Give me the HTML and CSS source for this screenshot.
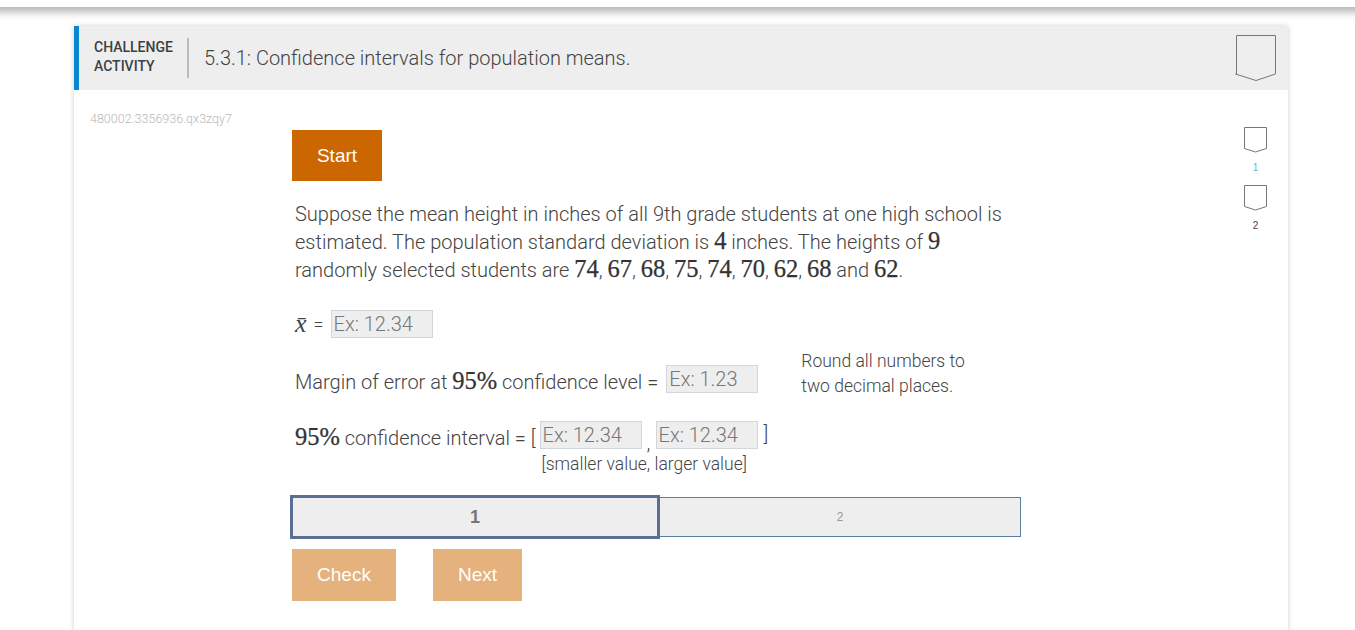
FILE: index.html
```html
<!DOCTYPE html>
<html lang="en">

    <head>
        <meta charset="UTF-8">
        <title>5.3.1: Confidence intervals for population means.</title>
        <link rel="stylesheet" href="styles.css">
    </head>

    <body>
        <div class="top_bar"></div>

        <section class="card">
            <header class="card_header">
                <div class="activity_label">CHALLENGE<br>ACTIVITY</div>
                <h1 class="activity_title">5.3.1: Confidence intervals for population means.</h1>
                <svg class="bookmark_big" width="42" height="47" viewBox="0 0 42 47">
                    <path d="M1.5 .5H40.5V39L21 45.5 .5 39H1.5Z" fill="none" stroke="#777" stroke-width="1"/>
                </svg>
            </header>

            <div class="card_body">
                <div class="activity_id">480002.3356936.qx3zqy7</div>

                <main class="question">
                    <button class="btn btn_start">Start</button>

                    <p class="prompt">Suppose the mean height in inches of all 9th grade students at one high school is estimated. The population standard deviation is <span class="math">4</span> inches. The heights of <span class="math">9</span> randomly selected students are <span class="math">74</span>, <span class="math">67</span>, <span class="math">68</span>, <span class="math">75</span>, <span class="math">74</span>, <span class="math">70</span>, <span class="math">62</span>, <span class="math">68</span> and <span class="math">62</span>.</p>

                    <div class="row row_mean">
                        <span class="math_var">x̄</span>
                        <span class="equals">=</span>
                        <input class="answer answer_wide" type="text" placeholder="Ex: 12.34">
                    </div>

                    <div class="row row_margin">
                        <span class="row_text">Margin of error at <span class="math">95%</span> confidence level =</span>
                        <input class="answer answer_short" type="text" placeholder="Ex: 1.23">
                        <div class="round_note">Round all numbers to<br>two decimal places.</div>
                    </div>

                    <div class="row row_interval">
                        <span class="row_text"><span class="math">95%</span> confidence interval = [</span>
                        <div class="interval_inputs">
                            <div class="interval_fields">
                                <input class="answer answer_wide" type="text" placeholder="Ex: 12.34">
                                <span class="comma">,</span>
                                <input class="answer answer_wide" type="text" placeholder="Ex: 12.34">
                                <span class="bracket">]</span>
                            </div>
                            <div class="interval_hint">[smaller value, larger value]</div>
                        </div>
                    </div>

                    <div class="levels">
                        <div class="level level_active">1</div>
                        <div class="level">2</div>
                    </div>

                    <div class="actions">
                        <button class="btn btn_off btn_check">Check</button>
                        <button class="btn btn_off btn_next">Next</button>
                    </div>
                </main>

                <aside class="rail">
                    <svg width="25" height="26" viewBox="0 0 25 26">
                        <path d="M1.5 .5H23.5V21.5L12.5 25 1.5 21.5Z" fill="none" stroke="#777" stroke-width="1"/>
                    </svg>
                    <span class="rail_num rail_num_current">1</span>
                    <svg width="25" height="26" viewBox="0 0 25 26">
                        <path d="M1.5 .5H23.5V21.5L12.5 25 1.5 21.5Z" fill="none" stroke="#777" stroke-width="1"/>
                    </svg>
                    <span class="rail_num">2</span>
                </aside>
            </div>
        </section>
    </body>

</html>
```
FILE: styles.css
```css
html,
body {
    height: 100%;
}

body {
    margin: 0;
    overflow: hidden;
    background-color: white;
    font-family: Roboto, "Liberation Sans", sans-serif;
    font-weight: 300;
    color: #333;
}

.top_bar {
    height: 7px;
    margin: 0 -20px;
    background-color: white;
    box-shadow: 0 2px 11px rgba(0, 0, 0, 0.55);
    position: relative;
}

.card {
    width: 1214px;
    height: 620px;
    margin: 19px 0 0 74px;
    background-color: white;
    box-shadow: 0 0 5px rgba(0, 0, 0, 0.2);
}

.card_header {
    display: flex;
    align-items: center;
    height: 64px;
    padding-left: 15px;
    padding-right: 11px;
    background-color: #eee;
    border-left: 5px solid #0a86d0;
}

.activity_label {
    width: 93px;
    height: 40px;
    border-right: 2px solid #bbb;
    font-size: 14px;
    font-weight: 500;
    line-height: 19px;
    color: #3c4043;
}

.activity_title {
    flex: 1;
    margin: 0 0 0 15px;
    font-size: 20px;
    font-weight: 300;
    color: #444;
}

.card_body {
    display: flex;
    position: relative;
}

.activity_id {
    width: 202px;
    padding-left: 16px;
    padding-top: 21px;
    font-size: 12.5px;
    color: #b8b8b8;
}

.question {
    width: 729px;
    padding-top: 40px;
}

.btn {
    display: block;
    border: none;
    padding: 0;
    color: white;
    font-family: "Liberation Sans", sans-serif;
    font-size: 19px;
    font-weight: 400;
}

.btn_start {
    width: 90px;
    height: 51px;
    background-color: #cc6600;
}

.prompt {
    margin: 19px 0 0 3px;
    width: 715px;
    font-size: 20px;
    line-height: 28px;
    color: #444;
}

.math {
    font-family: "Liberation Serif", serif;
    font-size: 24.5px;
    font-weight: 400;
    line-height: 1;
    color: #333;
    -webkit-text-stroke: 0.25px #333;
}

.math_var {
    font-family: "Liberation Serif", serif;
    font-size: 26px;
    line-height: 28px;
    font-style: italic;
    font-weight: 400;
}

.row {
    display: flex;
    margin-left: 3px;
    font-size: 20px;
    color: #444;
}

.row_mean {
    margin-top: 26px;
    align-items: center;
}

.equals {
    margin-left: 7px;
    margin-right: 7px;
    font-size: 18px;
}

.row_margin {
    margin-top: 27px;
}

.row_interval {
    margin-top: 22px;
}

.row_text {
    white-space: nowrap;
    line-height: 32px;
    padding-top: 1px;
}

.answer {
    box-sizing: border-box;
    height: 28px;
    padding: 0 2px;
    background-color: #eee;
    border: 1px solid #d3d6d8;
    font-family: Roboto, "Liberation Sans", sans-serif;
    font-size: 20px;
    font-weight: 300;
}

.answer::placeholder {
    color: #777;
    opacity: 1;
}

.answer_wide {
    width: 102px;
}

.answer_short {
    width: 92px;
    margin-left: 8px;
}

.round_note {
    margin-left: 43px;
    margin-top: -16px;
    font-size: 17.5px;
    line-height: 25px;
}

.interval_inputs {
    margin-left: 4px;
}

.interval_fields {
    display: flex;
}

.comma {
    width: 14px;
    text-align: center;
    line-height: 44px;
    height: 28px;
}

.bracket {
    margin-left: 6px;
    line-height: 26px;
}

.interval_hint {
    margin-top: 2px;
    margin-left: 2px;
    font-size: 17.5px;
    line-height: 26px;
}

.levels {
    display: flex;
    align-items: center;
    width: 731px;
    margin-top: 18px;
    margin-left: -2px;
}

.level {
    flex: 1;
    height: 40px;
    box-sizing: border-box;
    border: 1px solid #5a7da3;
    border-left: none;
    background-color: #eee;
    text-align: center;
    font-family: "Liberation Sans", sans-serif;
    font-size: 12px;
    font-weight: 400;
    line-height: 38px;
    color: #999;
}

.level_active {
    flex: none;
    width: 370px;
    height: 44px;
    border: 3px solid #5a7092;
    font-size: 18px;
    font-weight: 700;
    color: #777;
}

.actions {
    display: flex;
    margin-top: 10px;
}

.btn_off {
    height: 52px;
    background-color: #e5b17c;
}

.btn_check {
    width: 104px;
}

.btn_next {
    width: 89px;
    margin-left: 37px;
}

.rail {
    display: flex;
    flex-direction: column;
    align-items: center;
    position: absolute;
    top: 37px;
    right: 20px;
    width: 25px;
}

.rail_num {
    height: 32px;
    padding-top: 9px;
    box-sizing: border-box;
    font-family: "Liberation Sans", sans-serif;
    font-size: 10px;
    color: #444;
}

.rail_num_current {
    color: #6fb3dd;
}
```
